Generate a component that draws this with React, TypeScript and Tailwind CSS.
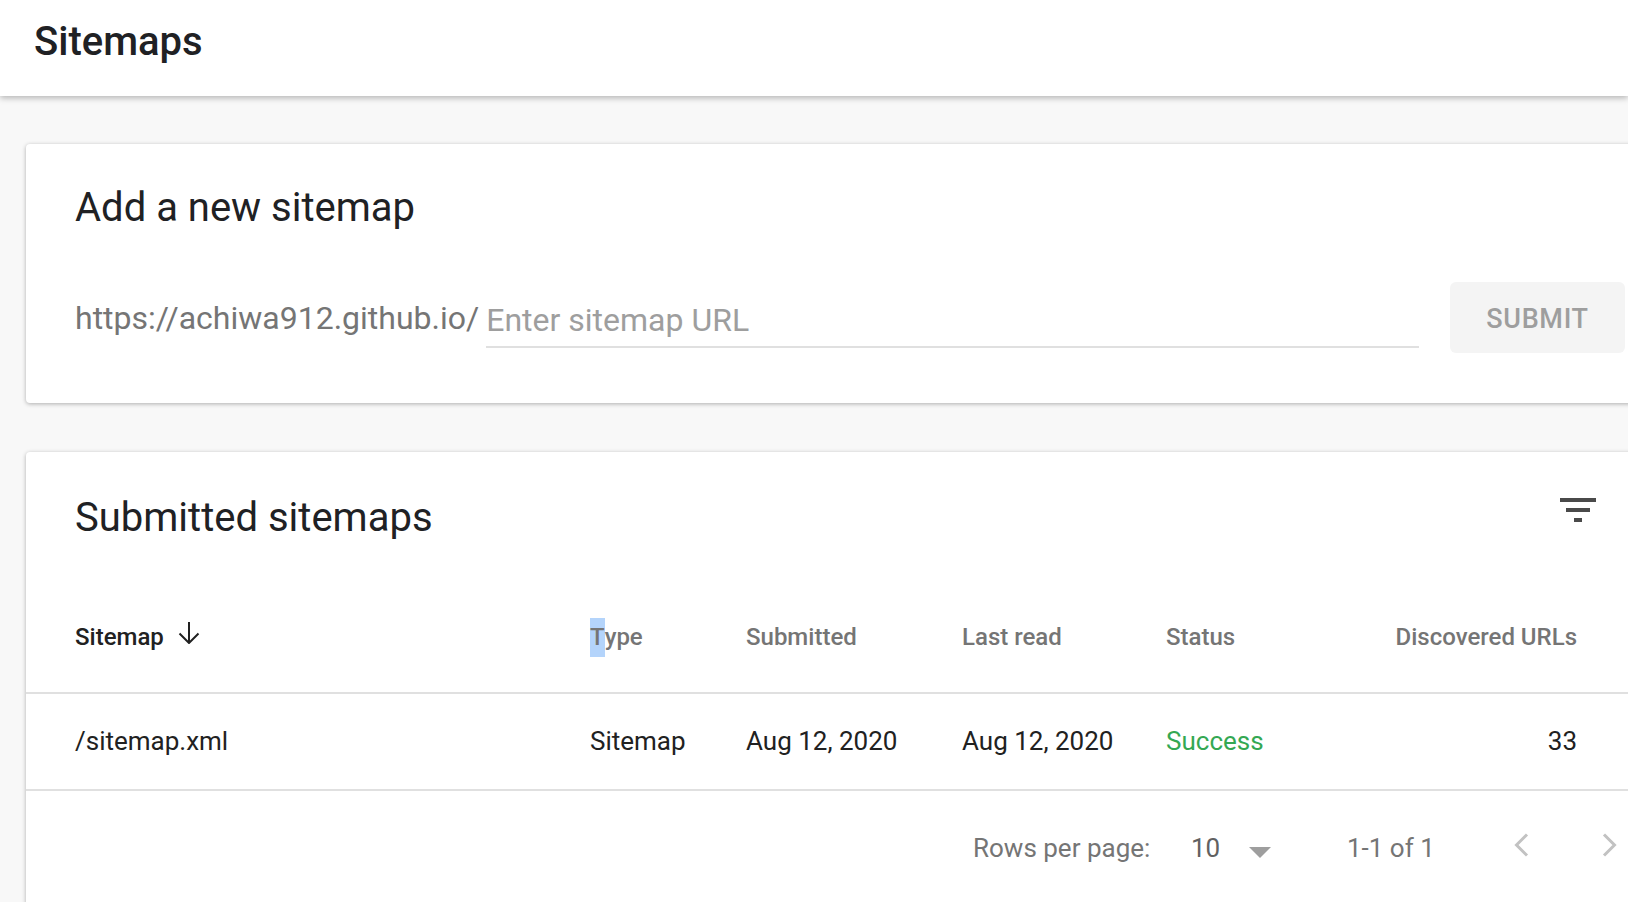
import React from 'react';

// --- DATA ---
const rows = [
  { sitemap: '/sitemap.xml', type: 'Sitemap', submitted: 'Aug 12, 2020', lastRead: 'Aug 12, 2020', status: 'Success', urls: 33 },
];

// --- ICONS ---
function FilterIcon() {
  return (
    <svg viewBox="0 0 24 24" className="w-[48px] h-[48px]" fill="#4a4a4a">
      <path d="M10 18h4v-2h-4v2zM3 6v2h18V6H3zm3 7h12v-2H6v2z" />
    </svg>
  );
}

function SortArrow() {
  return (
    <svg viewBox="0 0 22 22" className="w-[22px] h-[22px] -translate-y-[4px]" fill="none" stroke="#212121" strokeWidth={2}>
      <path d="M11 0v20.5" />
      <path d="M1.5 11.5 11 21l9.5-9.5" />
    </svg>
  );
}

function Chevron({ dir }: { dir: 'left' | 'right' }) {
  return (
    <svg viewBox="0 0 16 24" className="w-[16px] h-[24px]" fill="none" stroke="#c2c2c2" strokeWidth={3}>
      <path d={dir === 'left' ? 'M14 1.5 3.5 12 14 22.5' : 'M2 1.5 12.5 12 2 22.5'} />
    </svg>
  );
}

export default function App() {
  return (
    <div className="w-[1628px] h-[902px] overflow-hidden bg-[#f8f8f8] font-['Roboto',sans-serif] text-[#212121]">
      {/* Top bar */}
      <header className="relative z-10 h-[96px] bg-white flex items-center pl-[34px] pb-[12px] shadow-[0_2px_6px_rgba(0,0,0,0.28)]">
        <h1 className="text-[40px] font-medium leading-none text-[#202124]">Sitemaps</h1>
      </header>

      <main className="pl-[26px] pt-[48px]">
        {/* Add a new sitemap */}
        <section className="w-[1624px] h-[259px] bg-white rounded-[4px] shadow-[0_1px_4px_rgba(0,0,0,0.3)] pl-[49px] pr-[25px] pt-[40px]">
          <h2 className="text-[40px] leading-[48px] text-[#202124]">Add a new sitemap</h2>
          <div className="mt-[50px] flex items-center h-[71px]">
            <span className="text-[32px] text-[#757575] whitespace-nowrap">https://achiwa912.github.io/</span>
            <div className="ml-[7px] w-[933px] h-[58px] mt-[2px] border-b-2 border-[#e0e0e0] flex items-center">
              <input
                className="w-full bg-transparent outline-none text-[32px] text-[#212121] placeholder:text-[#9e9e9e] translate-y-[2px]"
                placeholder="Enter sitemap URL"
              />
            </div>
            <button className="ml-auto w-[175px] h-[71px] pt-[4px] rounded-[6px] bg-[#f4f4f4] text-[#9e9e9e] text-[27px] font-medium tracking-wide">
              SUBMIT
            </button>
          </div>
        </section>

        {/* Submitted sitemaps */}
        <section className="mt-[49px] w-[1624px] h-[470px] bg-white rounded-[4px] shadow-[0_1px_4px_rgba(0,0,0,0.3)] pt-[42px]">
          <div className="flex items-center justify-between pl-[49px] pr-[48px]">
            <h2 className="text-[40px] leading-[48px] text-[#202124]">Submitted sitemaps</h2>
            <div className="-mt-[16px]">
              <FilterIcon />
            </div>
          </div>

          {/* Table header */}
          <div className="mt-[36px] h-[116px] pt-[4px] flex items-center pl-[49px] pr-[73px] border-b-2 border-[#e0e0e0] text-[24px] leading-[39px] font-medium text-[#757575]">
            <div className="w-[515px] flex items-center gap-[14px] text-[#212121]">
              <span>Sitemap</span>
              <SortArrow />
            </div>
            <div className="w-[156px]">
              <span className="inline-block bg-[#b4d4fb]">T</span>ype
            </div>
            <div className="w-[216px]">Submitted</div>
            <div className="w-[204px]">Last read</div>
            <div className="w-[200px]">Status</div>
            <div className="flex-1 text-right">Discovered URLs</div>
          </div>

          {/* Rows */}
          {rows.map((r) => (
            <div key={r.sitemap} className="h-[97px] flex items-center pl-[49px] pr-[73px] border-b-2 border-[#e0e0e0] text-[26px] text-[#212121]">
              <div className="w-[515px]">{r.sitemap}</div>
              <div className="w-[156px]">{r.type}</div>
              <div className="w-[216px]">{r.submitted}</div>
              <div className="w-[204px]">{r.lastRead}</div>
              <div className="w-[200px] text-[#34a853]">{r.status}</div>
              <div className="flex-1 text-right">{r.urls}</div>
            </div>
          ))}

          {/* Pagination */}
          <div className="h-[114px] flex items-center pl-[947px] text-[26px] text-[#757575]">
            <span className="w-[218px]">Rows per page:</span>
            <span className="w-[48px] text-[#616161]">10</span>
            <svg viewBox="0 0 22 11" className="w-[22px] h-[11px] mt-[8px] ml-[10px]">
              <path d="M0 0h22L11 11z" fill="#9e9e9e" />
            </svg>
            <span className="ml-[76px] w-[150px]">1-1 of 1</span>
            <div className="ml-[16px] -mt-[6px]">
              <Chevron dir="left" />
            </div>
            <div className="ml-[73px] -mt-[6px]">
              <Chevron dir="right" />
            </div>
          </div>
        </section>
      </main>
    </div>
  );
}
